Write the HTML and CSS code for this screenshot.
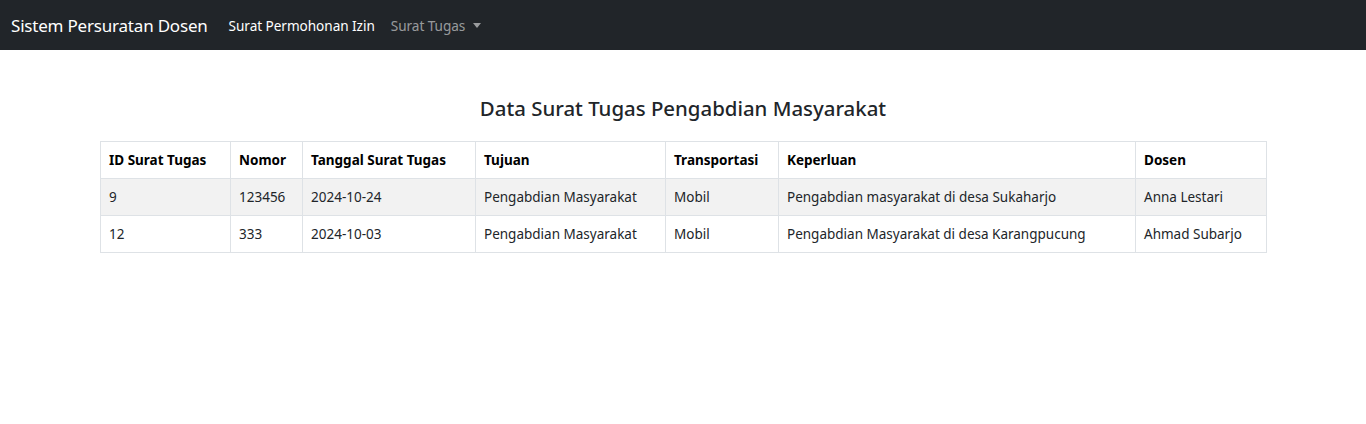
FILE: index.html
```html
<!DOCTYPE html>
<html lang="id">
<head>
<meta charset="utf-8">
<title>Sistem Persuratan Dosen</title>
<link rel="stylesheet" href="styles.css">
</head>
<body>
<nav class="navbar">
  <a class="brand" href="#">Sistem Persuratan Dosen</a>
  <ul class="nav">
    <li><a class="nav-link active" href="#">Surat Permohonan Izin</a></li>
    <li><a class="nav-link dropdown" href="#">Surat Tugas<span class="caret"></span></a></li>
  </ul>
</nav>
<main class="content">
  <h2 class="title">Data Surat Tugas Pengabdian Masyarakat</h2>
  <table class="data">
    <colgroup>
      <col class="c1"><col class="c2"><col class="c3"><col class="c4"><col class="c5"><col class="c6"><col class="c7">
    </colgroup>
    <thead>
      <tr><th>ID Surat Tugas</th><th>Nomor</th><th>Tanggal Surat Tugas</th><th>Tujuan</th><th>Transportasi</th><th>Keperluan</th><th>Dosen</th></tr>
    </thead>
    <tbody>
      <tr class="odd"><td>9</td><td>123456</td><td>2024-10-24</td><td>Pengabdian Masyarakat</td><td>Mobil</td><td>Pengabdian masyarakat di desa Sukaharjo</td><td>Anna Lestari</td></tr>
      <tr><td>12</td><td>333</td><td>2024-10-03</td><td>Pengabdian Masyarakat</td><td>Mobil</td><td>Pengabdian Masyarakat di desa Karangpucung</td><td>Ahmad Subarjo</td></tr>
    </tbody>
  </table>
</main>
</body>
</html>
```
FILE: styles.css
```css
* { box-sizing: border-box; }
html, body { margin: 0; padding: 0; }
body {
  font-family: "Noto Sans", "Open Sans", sans-serif;
  font-size: 14px;
  color: #212529;
  background: #fff;
}
a { text-decoration: none; }
.navbar {
  height: 50px;
  background: #212529;
  display: flex;
  align-items: center;
  padding: 0 11px;
}
.brand {
  color: #fff;
  font-size: 17px;
  margin-right: 21px;
  letter-spacing: -0.2px;
}
.nav {
  list-style: none;
  margin: 0;
  padding: 0;
  display: flex;
  gap: 16px;
}
.nav-link {
  font-size: 13.6px;
  color: rgba(255,255,255,0.55);
  letter-spacing: -0.05px;
}
.nav-link.active { color: #fff; }
.caret {
  display: inline-block;
  margin-left: 8px;
  vertical-align: 3px;
  border-top: 5px solid rgba(255,255,255,0.55);
  border-left: 4.5px solid transparent;
  border-right: 4.5px solid transparent;
}
.content {
  padding: 0 100px;
}
.title {
  margin: 0;
  padding-top: 44px;
  height: 91px;
  text-align: center;
  font-size: 20.4px;
  font-weight: 500;
  line-height: 28px;
  color: #212529;
}
.data {
  width: 1166px;
  border-collapse: collapse;
  table-layout: fixed;
}
.c1 { width: 130px; }
.c2 { width: 72px; }
.c3 { width: 173px; }
.c4 { width: 190px; }
.c5 { width: 113px; }
.c6 { width: 357px; }
.c7 { width: 131px; }
.data th, .data td {
  border: 1px solid #dee2e6;
  padding: 0 8px;
  height: 37px;
  text-align: left;
  vertical-align: middle;
  white-space: nowrap;
  font-size: 13.5px;
  line-height: 20px;
}
.data th { font-weight: 700; color: #000; }
.data tr.odd td { background: #f2f2f2; }
```
